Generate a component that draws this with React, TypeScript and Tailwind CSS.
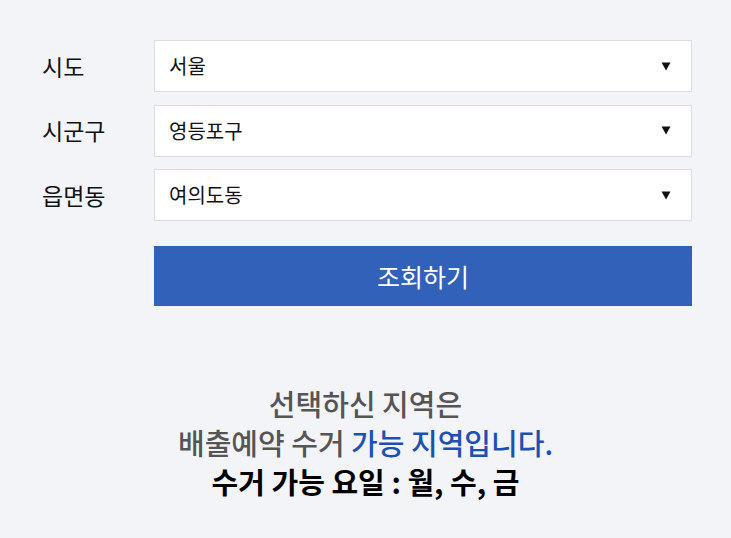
const rows = [
  { label: "시도", value: "서울" },
  { label: "시군구", value: "영등포구" },
  { label: "읍면동", value: "여의도동" },
];

function Caret() {
  return (
    <svg width="10" height="9" viewBox="0 0 10 9" className="shrink-0">
      <path d="M0.5 0.5 H9.5 L5 8.5 Z" fill="#111" />
    </svg>
  );
}

export default function App() {
  return (
    <div
      className="min-h-[538px] w-full bg-[#f3f4f8] px-[39px] pt-[40px] pb-10 text-[#111]"
      style={{ fontFamily: '"Noto Sans CJK KR", "Noto Sans", sans-serif' }}
    >
      <div className="flex flex-col gap-[12.5px]">
        {rows.map((r) => (
          <div key={r.label} className="flex items-center">
            <div className="w-[115px] pl-[3px] text-[23px] leading-none">{r.label}</div>
            <div className="flex h-[52px] flex-1 items-center justify-between border border-[#dcdde2] bg-white pl-[14px] pr-[20px]">
              <span className="text-[20px] leading-none">{r.value}</span>
              <Caret />
            </div>
          </div>
        ))}
      </div>

      <div className="mt-[25px] flex">
        <div className="w-[115px]" />
        <button className="flex h-[60px] flex-1 items-center justify-center bg-[#3161b9] text-[25px] leading-none text-white">
          조회하기
        </button>
      </div>

      <div className="mt-[78px] flex flex-col items-center text-[29px] leading-[39px]">
        <p className="font-medium text-[#555]">선택하신 지역은</p>
        <p className="font-medium text-[#555]">
          배출예약 수거 <span className="text-[#1d50b3]">가능 지역입니다.</span>
        </p>
        <p className="font-bold text-black">수거 가능 요일 : 월, 수, 금</p>
      </div>
    </div>
  );
}
